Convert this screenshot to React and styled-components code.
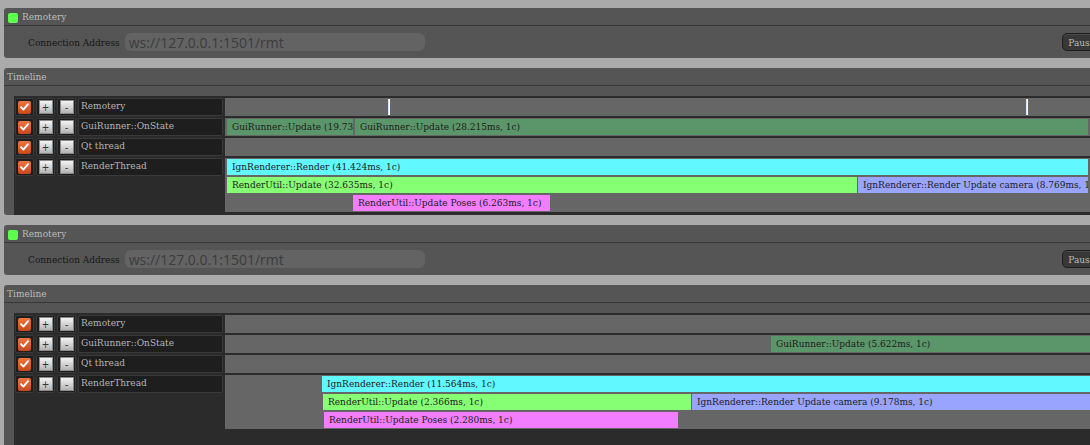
import React from 'react'
import styled, { createGlobalStyle } from 'styled-components'

const COLORS = {
  page: '#aaaaaa',
  window: '#555555',
  line: '#383838',
  content: '#2b2b2b',
  track: '#666666',
  frame: '#1e1e1e',
  frameBorder: '#3a3a3a',
  text: '#bbbbbb',
  green: '#5a9669',
  cyan: '#61f9ff',
  lime: '#87ff74',
  lavender: '#99a4ff',
  pink: '#f27eff',
}

const timelines = [
  {
    height: 147,
    threads: [
      { name: 'Remotery', ticks: [164, 802], lanes: [[]] },
      {
        name: 'GuiRunner::OnState',
        lanes: [
          [
            { left: 2, width: 126, color: COLORS.green, text: 'GuiRunner::Update (19.731ms, 1c)' },
            { left: 130, width: 733, color: COLORS.green, text: 'GuiRunner::Update (28.215ms, 1c)' },
          ],
        ],
      },
      { name: 'Qt thread', lanes: [[]] },
      {
        name: 'RenderThread',
        lanes: [
          [{ left: 2, width: 861, color: COLORS.cyan, text: 'IgnRenderer::Render (41.424ms, 1c)' }],
          [
            { left: 2, width: 630, color: COLORS.lime, text: 'RenderUtil::Update (32.635ms, 1c)' },
            { left: 633, width: 230, color: COLORS.lavender, text: 'IgnRenderer::Render Update camera (8.769ms, 1c)' },
          ],
          [{ left: 128, width: 197, color: COLORS.pink, text: 'RenderUtil::Update Poses (6.263ms, 1c)' }],
        ],
      },
    ],
  },
  {
    height: 220,
    threads: [
      { name: 'Remotery', lanes: [[]] },
      {
        name: 'GuiRunner::OnState',
        lanes: [[{ left: 546, width: 400, color: COLORS.green, text: 'GuiRunner::Update (5.622ms, 1c)' }]],
      },
      { name: 'Qt thread', lanes: [[]] },
      {
        name: 'RenderThread',
        lanes: [
          [{ left: 97, width: 900, color: COLORS.cyan, text: 'IgnRenderer::Render (11.564ms, 1c)' }],
          [
            { left: 98, width: 368, color: COLORS.lime, text: 'RenderUtil::Update (2.366ms, 1c)' },
            { left: 467, width: 500, color: COLORS.lavender, text: 'IgnRenderer::Render Update camera (9.178ms, 1c)' },
          ],
          [{ left: 99, width: 354, color: COLORS.pink, text: 'RenderUtil::Update Poses (2.280ms, 1c)' }],
        ],
      },
    ],
  },
]

const CheckIcon = () => (
  <svg width='9' height='8' viewBox='0 0 9 8'>
    <path d='M1 4.2 L3.4 6.6 L8 1.2' fill='none' stroke='#fff' strokeWidth='1.8' strokeLinecap='round' strokeLinejoin='round' />
  </svg>
)

const ConnectionWindow = () => (
  <Window>
    <TitleBar>
      <StatusDot />
      <Title>Remotery</Title>
    </TitleBar>
    <ConnBody>
      <ConnLabel>Connection Address</ConnLabel>
      <AddressInput defaultValue='ws://127.0.0.1:1501/rmt' />
      <PauseButton>Pause</PauseButton>
    </ConnBody>
  </Window>
)

const ThreadRow = ({ thread }) => (
  <>
    <LabelCell>
      <Frame $w={19}>
        <CheckBox>
          <CheckIcon />
        </CheckBox>
      </Frame>
      <Frame $w={19}>
        <FaceButton>+</FaceButton>
      </Frame>
      <Frame $w={19}>
        <FaceButton>-</FaceButton>
      </Frame>
      <NameBox>{thread.name}</NameBox>
    </LabelCell>
    <Track>
      {thread.lanes.map((lane, i) => (
        <Lane key={i}>
          {lane.map((bar, j) => (
            <Bar key={j} $color={bar.color} style={{ left: bar.left, width: bar.width }}>
              {bar.text}
            </Bar>
          ))}
        </Lane>
      ))}
      {(thread.ticks || []).map((x) => (
        <Tick key={x} style={{ left: x }} />
      ))}
    </Track>
  </>
)

const TimelineWindow = ({ data }) => (
  <Window $height={data.height}>
    <TitleBar>
      <Title>Timeline</Title>
    </TitleBar>
    <TimelineBody>
      <Content>
        {data.threads.map((t) => (
          <ThreadRow key={t.name} thread={t} />
        ))}
      </Content>
    </TimelineBody>
  </Window>
)

const App = () => (
  <>
    <GlobalStyle />
    <Page>
      <ConnectionWindow />
      <TimelineWindow data={timelines[0]} />
      <ConnectionWindow />
      <TimelineWindow data={timelines[1]} />
    </Page>
  </>
)

export default App

// styling
const GlobalStyle = createGlobalStyle`
  html, body {
    margin: 0;
    padding: 0;
    background: ${COLORS.page};
    overflow: hidden;
  }
  body {
    font-family: 'DejaVu Serif', serif;
    font-stretch: condensed;
    font-size: 10px;
  }
`
const Page = styled.div`
  display: flex;
  flex-direction: column;
  gap: 10px;
  padding: 8px 0 0 4px;
  width: 1106px;
`
const Window = styled.div`
  flex-shrink: 0;
  background: ${COLORS.window};
  border-radius: 3px;
  overflow: hidden;
  height: ${(p) => (p.$height ? `${p.$height}px` : 'auto')};
`
const TitleBar = styled.div`
  height: 17px;
  border-bottom: 1px solid ${COLORS.line};
  display: flex;
  align-items: center;
  gap: 4px;
  padding-left: 3px;
`
const StatusDot = styled.div`
  width: 10px;
  height: 10px;
  margin: 5px 0 0 1px;
  align-self: flex-start;
  border-radius: 2px;
  background: #5dff4f;
`
const Title = styled.span`
  color: ${COLORS.text};
  line-height: 17px;
`
const ConnBody = styled.div`
  display: flex;
  align-items: center;
  padding: 7px 9px 7px 24px;
`
const ConnLabel = styled.span`
  color: #151515;
  margin-right: 5px;
`
const AddressInput = styled.input`
  width: 300px;
  height: 18px;
  box-sizing: border-box;
  border: none;
  outline: none;
  border-radius: 6px;
  background: #636363;
  padding: 0 4px;
  font-family: 'Open Sans', sans-serif;
  font-size: 14px;
  color: #3c3c3c;
`
const PauseButton = styled.button`
  margin-left: auto;
  height: 18px;
  padding: 0 5px;
  border: 1px solid #1e1e1e;
  border-radius: 5px;
  background: #383838;
  color: ${COLORS.text};
  font: inherit;
  box-shadow: inset 0 1px 0 #4a4a4a;
`
const TimelineBody = styled.div`
  padding: 10px 0 0 10px;
`
const Content = styled.div`
  display: grid;
  grid-template-columns: 211px 1fr;
  row-gap: 2px;
  align-items: start;
  padding: 2px 0 40px;
  background: ${COLORS.content};
`
const LabelCell = styled.div`
  display: flex;
  gap: 2px;
  padding-left: 1px;
`
const Frame = styled.div`
  box-sizing: border-box;
  width: ${(p) => p.$w}px;
  height: 18px;
  display: flex;
  align-items: center;
  justify-content: center;
  background: ${COLORS.frame};
  border: 1px solid ${COLORS.frameBorder};
  border-radius: 2px;
`
const CheckBox = styled.div`
  width: 13px;
  height: 13px;
  border-radius: 2px;
  display: flex;
  align-items: center;
  justify-content: center;
  background: linear-gradient(#f0763f, #c8481c);
`
const FaceButton = styled.div`
  box-sizing: border-box;
  width: 14px;
  height: 14px;
  display: flex;
  align-items: center;
  justify-content: center;
  background: linear-gradient(#f4f4f4, #b4b4b4);
  border: 1px solid #8a8a8a;
  font-family: 'DejaVu Sans', sans-serif;
  font-size: 10px;
  color: #333;
`
const NameBox = styled.div`
  box-sizing: border-box;
  width: 145px;
  height: 18px;
  padding-left: 2px;
  line-height: 14px;
  background: ${COLORS.frame};
  border: 1px solid ${COLORS.frameBorder};
  border-radius: 2px;
  color: #b4b4b4;
  white-space: nowrap;
  overflow: hidden;
`
const Track = styled.div`
  position: relative;
  background: ${COLORS.track};
`
const Lane = styled.div`
  position: relative;
  height: 18px;
`
const Bar = styled.div`
  position: absolute;
  top: 1px;
  height: 16px;
  box-sizing: border-box;
  padding-left: 5px;
  line-height: 16px;
  background: ${(p) => p.$color};
  color: #202020;
  white-space: nowrap;
  overflow: hidden;
`
const Tick = styled.div`
  position: absolute;
  top: 1px;
  height: 16px;
  width: 1px;
  background: #ffffff;
  box-shadow: -1px 0 0 #cfe6ff;
`
